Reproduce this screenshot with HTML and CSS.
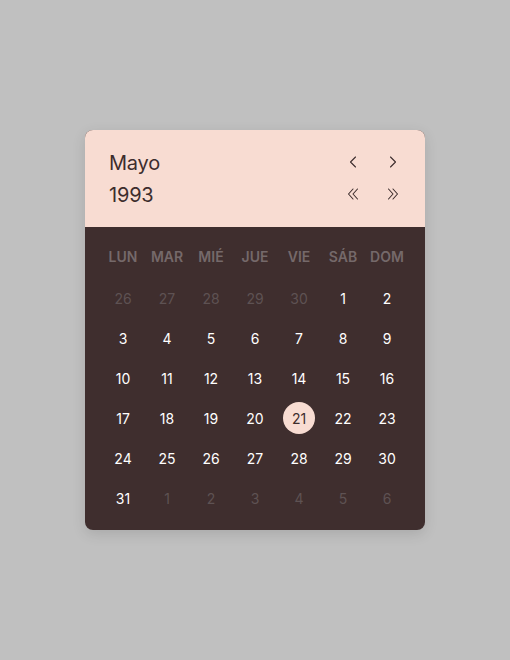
FILE: index.html
```html
<!DOCTYPE html>
<html lang="es">
<head>
<meta charset="utf-8">
<link rel="stylesheet" href="styles.css">
</head>
<body>
<div class="card">
  <div class="head">
    <div class="titles">
      <div class="t">Mayo</div>
      <div class="t">1993</div>
    </div>
    <div class="navs">
      <div class="navrow">
        <span class="btn"><svg width="14" height="14" viewBox="0 0 14 14"><path d="M9.5 2 4.5 7 9.5 12" fill="none" stroke="#3d2d2d" stroke-width="1.1" stroke-linecap="round" stroke-linejoin="round"/></svg></span>
        <span class="btn"><svg width="14" height="14" viewBox="0 0 14 14"><path d="M4.5 2 9.5 7 4.5 12" fill="none" stroke="#3d2d2d" stroke-width="1.1" stroke-linecap="round" stroke-linejoin="round"/></svg></span>
      </div>
      <div class="navrow">
        <span class="btn"><svg width="14" height="14" viewBox="0 0 14 14"><path d="M7 2 2.5 7 7 12M11.5 2 7 7 11.5 12" fill="none" stroke="#3d2d2d" stroke-width="1.1" stroke-linecap="round" stroke-linejoin="round"/></svg></span>
        <span class="btn"><svg width="14" height="14" viewBox="0 0 14 14"><path d="M2.5 2 7 7 2.5 12M7 2 11.5 7 7 12" fill="none" stroke="#3d2d2d" stroke-width="1.1" stroke-linecap="round" stroke-linejoin="round"/></svg></span>
      </div>
    </div>
  </div>
  <div class="body">
    <div class="grid">
      <div class="wd">LUN</div><div class="wd">MAR</div><div class="wd">MIÉ</div><div class="wd">JUE</div><div class="wd">VIE</div><div class="wd">SÁB</div><div class="wd">DOM</div>
      <div class="d off">26</div><div class="d off">27</div><div class="d off">28</div><div class="d off">29</div><div class="d off">30</div><div class="d">1</div><div class="d">2</div>
      <div class="d">3</div><div class="d">4</div><div class="d">5</div><div class="d">6</div><div class="d">7</div><div class="d">8</div><div class="d">9</div>
      <div class="d">10</div><div class="d">11</div><div class="d">12</div><div class="d">13</div><div class="d">14</div><div class="d">15</div><div class="d">16</div>
      <div class="d">17</div><div class="d">18</div><div class="d">19</div><div class="d">20</div><div class="d"><span class="sel">21</span></div><div class="d">22</div><div class="d">23</div>
      <div class="d">24</div><div class="d">25</div><div class="d">26</div><div class="d">27</div><div class="d">28</div><div class="d">29</div><div class="d">30</div>
      <div class="d">31</div><div class="d off">1</div><div class="d off">2</div><div class="d off">3</div><div class="d off">4</div><div class="d off">5</div><div class="d off">6</div>
    </div>
  </div>
</div>
</body>
</html>
```
FILE: styles.css
```css
* { box-sizing: border-box; }
html, body { margin: 0; padding: 0; }
body {
  background: #c0c0c0;
  font-family: Inter, "Noto Sans", sans-serif;
  width: 510px;
  height: 660px;
  display: flex;
  justify-content: center;
  padding-top: 130px;
}
.card {
  width: 340px;
  height: 400px;
  border-radius: 8px;
  overflow: hidden;
  background: #3f2e2e;
  box-shadow: 0 4px 14px rgba(0,0,0,0.12);
  display: flex;
  flex-direction: column;
}
.head {
  background: #f8dcd2;
  height: 97px;
  padding: 17px 24px 16px 24px;
  display: flex;
  justify-content: space-between;
}
.titles .t {
  font-size: 20px;
  line-height: 32px;
  color: #3d2d2d;
  letter-spacing: -0.2px;
}
.navs { display: flex; flex-direction: column; margin-right: -6px; margin-top: -1px; }
.navrow { display: flex; gap: 12px; height: 32px; align-items: center; }
.btn { width: 28px; height: 28px; display: flex; align-items: center; justify-content: center; }
.body {
  flex: 1;
  padding: 9px 16px 12px 16px;
}
.grid {
  display: grid;
  grid-template-columns: repeat(7, 44px);
  grid-template-rows: 42px;
  grid-auto-rows: 40px;
}
.wd {
  display: flex; align-items: center; justify-content: center;
  padding-bottom: 2px;
  font-size: 14px;
  font-weight: 600;
  color: #75696a;
}
.d {
  display: flex; align-items: center; justify-content: center;
  font-size: 14px;
  color: #ffffff;
}
.d.off { color: #5e5253; }
.sel {
  width: 32px; height: 32px; border-radius: 50%;
  background: #f8dcd2; color: #3d2d2d;
  display: flex; align-items: center; justify-content: center;
}
```
